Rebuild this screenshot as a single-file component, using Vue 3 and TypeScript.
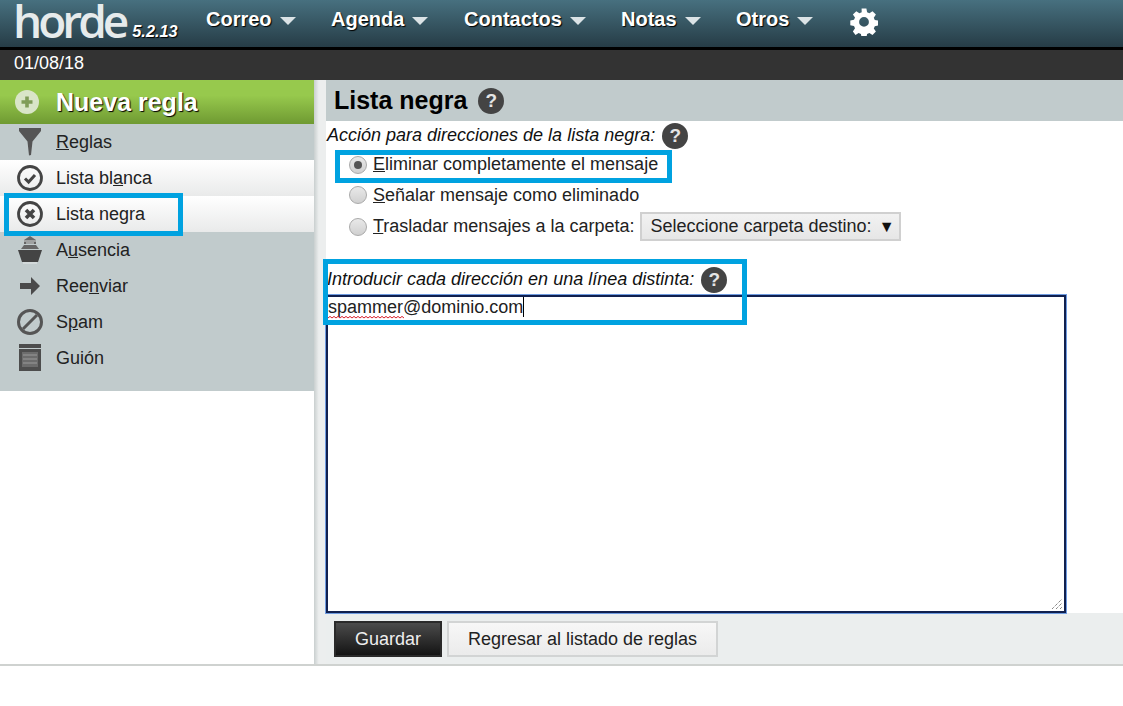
<script setup lang="ts">
interface Part { a: string; u: string; z: string }
interface Side { id: string; label: Part; kind: string }
const menus = [
  { t: 'Correo', w: 125 },
  { t: 'Agenda', w: 133 },
  { t: 'Contactos', w: 157 },
  { t: 'Notas', w: 115 },
  { t: 'Otros', w: 114 },
]
const side: Side[] = [
  { id: 'filter', kind: 'plain', label: { a: '', u: 'R', z: 'eglas' } },
  { id: 'check', kind: 'lit', label: { a: 'Lista bl', u: 'a', z: 'nca' } },
  { id: 'cross', kind: 'lit mark', label: { a: 'Lista negra', u: '', z: '' } },
  { id: 'ship', kind: 'plain', label: { a: 'A', u: 'u', z: 'sencia' } },
  { id: 'arrow', kind: 'plain', label: { a: 'Ree', u: 'n', z: 'viar' } },
  { id: 'ban', kind: 'plain', label: { a: 'S', u: 'p', z: 'am' } },
  { id: 'script', kind: 'plain', label: { a: 'Guión', u: '', z: '' } },
]
const wave = 'M0 2' + ' l2 -1.6 l2 1.6'.repeat(19)
</script>

<template>
  <div class="page">
    <header class="top">
      <div class="logo"><span class="word">horde</span><span class="ver">5.2.13</span></div>
      <nav class="nav">
        <div v-for="m in menus" :key="m.t" class="menu" :style="{ width: m.w + 'px' }">
          <span>{{ m.t }}</span><i class="caret"></i>
        </div>
        <svg class="gear" viewBox="0 0 28 28" width="28" height="28">
          <path fill="#fff" fill-rule="evenodd" d="M11.6 1h4.8l.7 3.7 2.3 1 3.1-2.1 3.4 3.4-2.1 3.1 1 2.3 3.7.7v4.8l-3.7.7-1 2.3 2.1 3.1-3.4 3.4-3.1-2.1-2.3 1-.7 3.7h-4.8l-.7-3.7-2.3-1-3.1 2.1L2.9 23.8 5 20.7l-1-2.3-3.7-.7v-4.8l3.7-.7 1-2.3L2.9 7l3.4-3.4 3.1 2.1 2.3-1zM14 9.4a4.9 4.9 0 1 0 0 9.8 4.9 4.9 0 0 0 0-9.8z" transform="translate(0 -.4)"/>
        </svg>
      </nav>
    </header>
    <div class="datebar">01/08/18</div>

    <div class="body">
      <aside class="sidebar">
        <div class="newrule">
          <svg viewBox="0 0 24 24" width="24" height="24" class="plus">
            <circle cx="12" cy="12" r="12" fill="#d9e5c8"/>
            <path d="M12 6.5v11M6.5 12h11" stroke="#7f9c58" stroke-width="3.6"/>
          </svg>
          <span>Nueva regla</span>
        </div>
        <ul class="list">
          <li v-for="s in side" :key="s.id" :class="['row', s.kind]">
            <svg viewBox="0 0 28 28" width="28" height="28" class="ico">
              <g v-if="s.id === 'filter'">
                <path d="M3 0h22v3l-8.500 10.500L15 27l-2 .5L11.500 13.500 3 3z" fill="#555"/>
              </g>
              <g v-else-if="s.id === 'check'">
                <circle cx="14" cy="14" r="11.500" fill="none" stroke="#444" stroke-width="2.800"/>
                <path d="M9 14.500l3.600 3.600L19 11" fill="none" stroke="#444" stroke-width="3"/>
              </g>
              <g v-else-if="s.id === 'cross'">
                <circle cx="14" cy="14" r="11.500" fill="none" stroke="#444" stroke-width="2.800"/>
                <path d="M10 10l8 8M18 10l-8 8" fill="none" stroke="#444" stroke-width="3.600"/>
              </g>
              <g v-else-if="s.id === 'ship'">
                <path d="M14 0l6 4v4H8V4z" fill="#666"/>
                <path d="M5 13l3-4h12l3 4z" fill="#666"/>
                <path d="M8 5h12M10 7h8" stroke="#d8dddd" stroke-width="1"/>
                <path d="M2 14h24l-4 12H6z" fill="#444"/>
                <path d="M7 27h14" stroke="#e4e8e8" stroke-width="1"/>
              </g>
              <g v-else-if="s.id === 'arrow'">
                <path d="M4 11h11V5l9 9-9 9v-6H4z" fill="#4a4a4a"/>
              </g>
              <g v-else-if="s.id === 'ban'">
                <circle cx="14" cy="14" r="11.500" fill="none" stroke="#555" stroke-width="3"/>
                <path d="M7 21L21 7" stroke="#555" stroke-width="3"/>
              </g>
              <g v-else>
                <rect x="3" y="0" width="22" height="27" fill="#4d4d4d"/>
                <path d="M3 4.500h22" stroke="#c1cbcc" stroke-width="1"/>
                <rect x="6" y="8" width="16" height="15" fill="#6c6c6c"/>
                <path d="M7 11h14M7 15h14M7 19h14" stroke="#8a8a8a" stroke-width="1.500"/>
              </g>
            </svg>
            <span class="lbl">{{ s.label.a }}<u v-if="s.label.u">{{ s.label.u }}</u>{{ s.label.z }}</span>
            <i v-if="s.id === 'cross'" class="hl hl-side"></i>
          </li>
        </ul>
      </aside>

      <div class="gutter"></div>

      <main class="main">
        <h1 class="title">Lista negra <span class="q big">?</span></h1>
        <div class="content">
          <div class="legend">Acción para direcciones de la lista negra: <span class="q">?</span></div>
          <div class="opt first">
            <i class="radio on"></i><span><u>E</u>liminar completamente el mensaje</span>
            <i class="hl hl-opt"></i>
          </div>
          <div class="opt"><i class="radio"></i><span><u>S</u>eñalar mensaje como eliminado</span></div>
          <div class="opt third">
            <i class="radio"></i><span><u>T</u>rasladar mensajes a la carpeta:</span>
            <div class="select">Seleccione carpeta destino: <b>▼</b></div>
          </div>
          <div class="block">
            <div class="legend l2">Introducir cada dirección en una línea distinta: <span class="q">?</span></div>
            <div class="area">
              <span class="typed"><span class="sp">spammer<svg class="wave" viewBox="0 0 76 3" width="76" height="3"><path :d="wave" fill="none" stroke="#d8202a" stroke-width="1"/></svg></span>@dominio.com</span><i class="cursor"></i>
              <svg class="grip" viewBox="0 0 12 12" width="12" height="12">
                <path d="M1 11L11 1M5 11l6-6M9 11l2-2" stroke="#555" stroke-width="1" stroke-dasharray="1 1"/>
              </svg>
            </div>
            <i class="hl hl-area"></i>
          </div>
        </div>
        <div class="actions">
          <button class="btn dark">Guardar</button>
          <button class="btn">Regresar al listado de reglas</button>
        </div>
      </main>
    </div>
  </div>
</template>

<style>
html, body { margin: 0; background: #fff; }
</style>

<style scoped>
.page { width: 1123px; height: 706px; overflow: hidden; font-family: "Liberation Sans", Arial, sans-serif; color: #111; background: #fff; }
.top { height: 47px; border-bottom: 3px solid #000; background: linear-gradient(#47707f, #263c46); display: flex; color: #fff; }
.logo { width: 206px; display: flex; align-items: flex-start; flex: none; padding-left: 13px; box-sizing: border-box; }
.word { font-family: "Open Sans", sans-serif; font-weight: 600; font-size: 46px; line-height: 41px; letter-spacing: -4px; color: #e6ebec; flex: none; }
.ver { font-size: 16.300px; line-height: 19px; font-weight: 700; font-style: italic; margin: 22px 0 0 7px; text-shadow: 1px 1px 1px #000; flex: none; }
.nav { display: flex; align-items: flex-start; padding-top: 8px; }
.menu { display: flex; align-items: center; font-size: 20px; font-weight: 700; line-height: 23px; text-shadow: 1px 1px 1px #000; gap: 8px; flex: none; }
.caret { width: 0; height: 0; border: 8px solid transparent; border-top: 8px solid #dbe3e6; border-bottom: 0; margin-top: 2px; }
.gear { flex: none; }
.datebar { height: 30px; background: #333; color: #fff; font-size: 18px; line-height: 26px; padding-left: 14px; box-sizing: border-box; }
.body { display: flex; height: 584px; border-bottom: 2px solid #cfd2d0; box-sizing: content-box; }
.sidebar { width: 314px; flex: none; background: #fff; }
.newrule { height: 44px; background: linear-gradient(#97c94d 0 35%, #6f9a32); display: flex; align-items: center; padding-left: 15px; gap: 17px; color: #fff; font-size: 25px; font-weight: 700; text-shadow: 1px 1px 1px #000; }
.list { list-style: none; margin: 0; padding: 0 0 15px; background: #c1cbcc; }
.row { height: 36px; display: flex; align-items: center; padding-left: 16px; gap: 12px; font-size: 18px; position: relative; box-sizing: border-box; color: #222; }
.row.lit { background: linear-gradient(#fff, #e9eaea); }
.ico { flex: none; }
.lbl { line-height: 20px; }
.hl { position: absolute; border: 5px solid #00a2e0; box-sizing: border-box; display: block; pointer-events: none; z-index: 2; }
.hl-side { left: 4px; top: -3px; width: 179px; height: 43px; }
.gutter { width: 12px; flex: none; background: linear-gradient(90deg, #c9cfcf, #eceeee 40%, #eceeee); }
.main { flex: 1; min-width: 0; display: flex; flex-direction: column; background: #fff; }
.title { margin: 0; height: 41px; background: #c1cbcc; font-size: 25px; font-weight: 700; color: #000; display: flex; align-items: center; gap: 11px; padding-left: 8px; box-sizing: border-box; }
.content { height: 492px; padding-top: 1px; box-sizing: border-box; }
.q { display: inline-flex; width: 26px; height: 26px; border-radius: 50%; background: #444; color: #e4e4e4; font-size: 19px; font-weight: 700; font-style: normal; align-items: center; justify-content: center; flex: none; }
.legend { display: flex; align-items: center; gap: 7px; height: 27px; font-size: 18px; font-style: italic; color: #111; padding-left: 1px; }
.opt { display: flex; align-items: center; height: 32px; padding-left: 23px; font-size: 18px; position: relative; color: #222; gap: 6px; }
.opt.first { height: 29px; margin-top: 1px; }
.opt.third { height: 29px; margin-top: 1px; }
.radio { width: 18px; height: 18px; border-radius: 50%; background: linear-gradient(#e9e9e9, #d0d0d0); border: 1px solid #a9a9a9; box-sizing: border-box; flex: none; position: relative; }
.radio.on::after { content: ""; position: absolute; left: 4px; top: 4px; width: 8px; height: 8px; background: #555; border-radius: 50%; }
.hl-opt { left: 9px; top: 0; width: 337px; height: 33px; }
.select { width: 261px; height: 29px; background: linear-gradient(#f2f2f2, #e6e6e6); border: 2px solid #d0d0d0; box-sizing: border-box; font-size: 18px; line-height: 25px; padding-left: 8px; color: #222; white-space: nowrap; flex: none; }
.select b { font-size: 16px; margin-left: 2px; font-weight: 400; color: #111; }
.block { position: relative; margin-top: 18px; }
.l2 { height: 36px; padding-top: 5px; box-sizing: border-box; }
.area { width: 740px; height: 318px; border: 2px solid #10204f; outline: 1px solid #6f9be0; box-sizing: border-box; background: #fff; font-size: 18px; line-height: 20px; position: relative; color: #222; padding: 0; display: flex; align-items: flex-start; }
.typed { display: inline-block; }
.sp { position: relative; }
.wave { position: absolute; left: 0; top: 19px; }
.cursor { width: 1px; height: 20px; background: #000; display: block; }
.grip { position: absolute; right: 1px; bottom: 1px; }
.hl-area { left: -3px; top: 0; width: 424px; height: 66px; }
.actions { flex: 1; background: #ebeeee; display: flex; gap: 5px; padding: 8px 0 0 8px; align-items: flex-start; }
.btn { height: 36px; font-family: inherit; font-size: 18px; border: 2px solid #d2d4d4; background: linear-gradient(#f7f7f7, #ebebeb); color: #222; width: 271px; padding: 0; box-sizing: border-box; }
.btn.dark { width: 108px; border-color: #2a2a2a; background: linear-gradient(#4b4b4b, #141414); color: #eee; }
</style>
